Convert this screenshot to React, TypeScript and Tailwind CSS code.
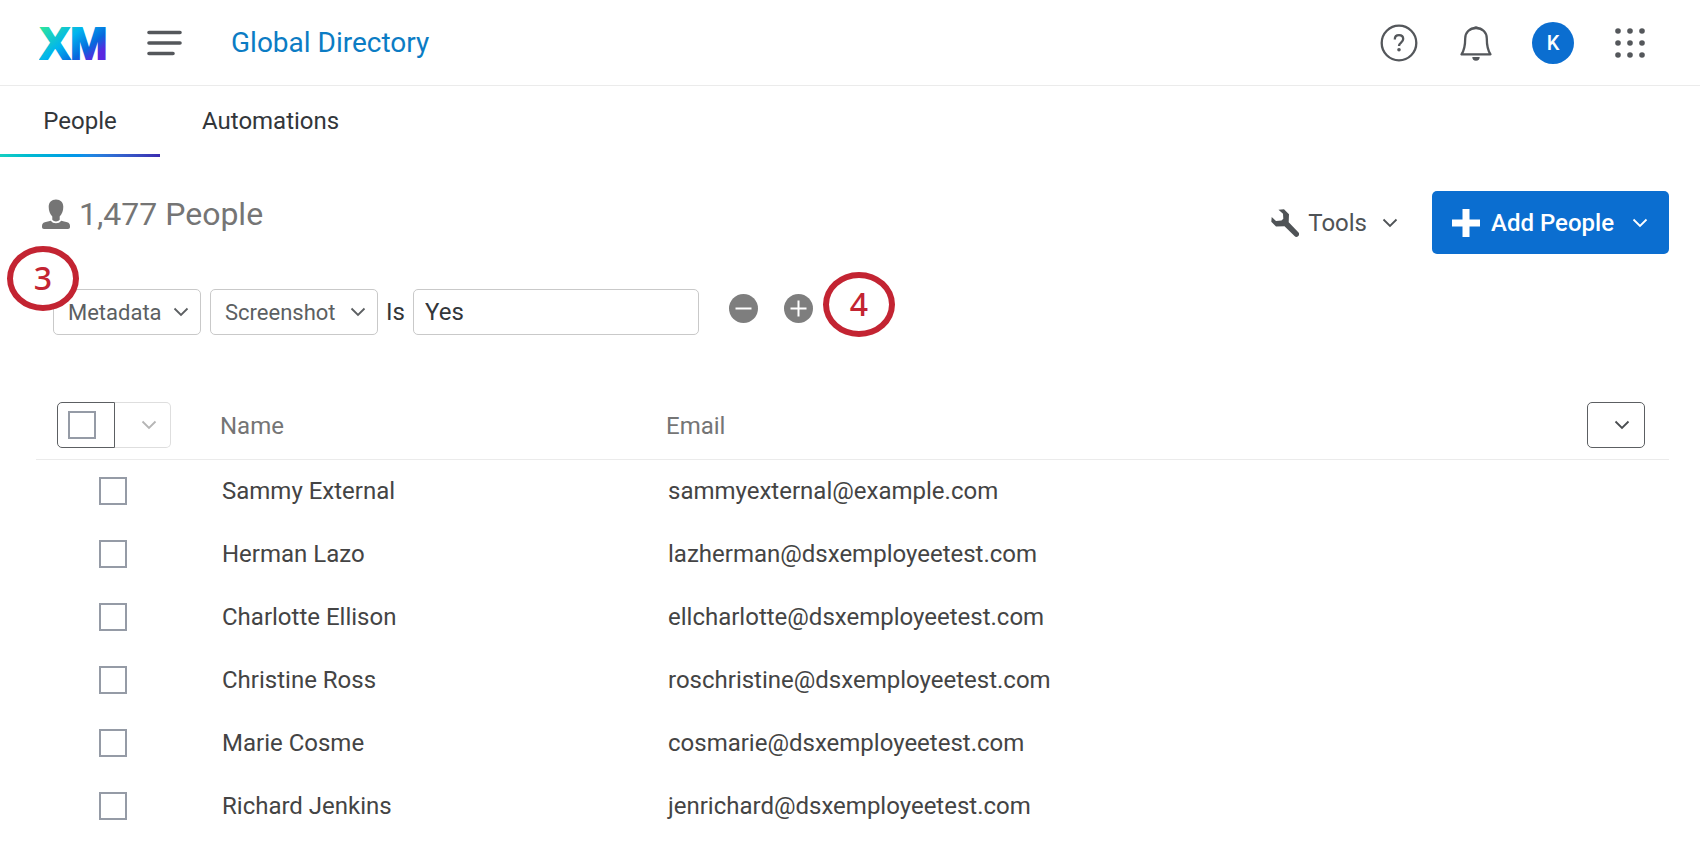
import type { ReactNode } from "react";
import clsx from "clsx";

const people = [
  { name: "Sammy External", email: "sammyexternal@example.com" },
  { name: "Herman Lazo", email: "lazherman@dsxemployeetest.com" },
  { name: "Charlotte Ellison", email: "ellcharlotte@dsxemployeetest.com" },
  { name: "Christine Ross", email: "roschristine@dsxemployeetest.com" },
  { name: "Marie Cosme", email: "cosmarie@dsxemployeetest.com" },
  { name: "Richard Jenkins", email: "jenrichard@dsxemployeetest.com" },
];

const Logo = () => (
  <svg width="70" height="56" viewBox="0 0 70 56" role="img" aria-label="XM">
    <defs>
      <linearGradient
        id="xm"
        gradientUnits="userSpaceOnUse"
        x1="12"
        y1="5"
        x2="56"
        y2="58"
      >
        <stop offset="0" stopColor="#2be3a0" />
        <stop offset="0.38" stopColor="#00b4ef" />
        <stop offset="0.65" stopColor="#0768dd" />
        <stop offset="0.82" stopColor="#5a27e0" />
      </linearGradient>
    </defs>
    <text
      x="1"
      y="44"
      fontFamily="Liberation Sans, sans-serif"
      fontWeight="700"
      fontSize="45"
      fill="url(#xm)"
      stroke="url(#xm)"
      strokeWidth="2"
    >
      XM
    </text>
  </svg>
);

const MenuIcon = () => (
  <svg width="36" height="26" viewBox="0 0 36 26" aria-hidden="true">
    <path
      d="M2 2.500h31M2 13h31M2 23.500h24"
      stroke="#54575b"
      strokeWidth="3.600"
      strokeLinecap="round"
    />
  </svg>
);

const HelpIcon = () => (
  <svg width="38" height="38" viewBox="0 0 38 38" fill="none" aria-hidden="true">
    <circle cx="19" cy="19" r="17.300" stroke="#54575b" strokeWidth="2.300" />
    <path
      d="M14.800 15.400c0-2.600 1.700-4.300 4.200-4.300s4.200 1.600 4.200 3.900c0 3.400-4.200 3.600-4.200 6.900"
      stroke="#54575b"
      strokeWidth="2.300"
    />
    <circle cx="19" cy="25.800" r="1.800" fill="#54575b" />
  </svg>
);

const BellIcon = () => (
  <svg width="32" height="36" viewBox="0 0 32 36" fill="none" aria-hidden="true">
    <path
      d="M16 3C9.500 3 5.200 7.600 5.200 13.500c0 7-.7 11.500-3.700 15.800h29c-3-4.300-3.700-8.800-3.700-15.800C26.800 7.600 22.500 3 16 3Z"
      stroke="#54575b"
      strokeWidth="2.300"
      strokeLinejoin="round"
    />
    <path
      d="M12.200 3.800a4 3.800 0 0 1 7.600 0ZM12.300 32h7.400a3.700 3.700 0 0 1-7.400 0Z"
      fill="#54575b"
    />
  </svg>
);

const GridIcon = () => (
  <svg width="32" height="32" viewBox="0 0 32 32" fill="#54575b" aria-hidden="true">
    {[4, 16, 28].map((cy) =>
      [4, 16, 28].map((cx) => <circle key={`${cx}-${cy}`} cx={cx} cy={cy} r="2.800" />),
    )}
  </svg>
);

const PersonIcon = () => (
  <svg width="28" height="31" viewBox="0 0 28 31" fill="#757575" aria-hidden="true">
    <path d="M14 .5c4.500 0 7.300 3 7.300 7.300 0 4.200-1.300 7.200-3.600 9.600v3.400c-1 1.200-2.300 1.700-3.700 1.700s-2.700-.5-3.700-1.700v-3.400C8 15 6.700 12 6.700 7.800 6.700 3.500 9.500.5 14 .5Z" />
    <path d="M8.800 21.700c1.200 1.700 3 2.500 5.200 2.500s4-.8 5.200-2.500l6 1.500c2 .5 2.800 2 2.800 4V28c0 1.300-.8 2-2 2H2c-1.200 0-2-.7-2-2v-.8c0-2 .8-3.500 2.800-4Z" />
  </svg>
);

const WrenchIcon = () => (
  <svg width="28" height="28" viewBox="0 0 28 28" fill="#4f5356" aria-hidden="true">
    <path d="M7.500.8 13 .3 18 5.200 17.700 13.300 27.300 23.200a2.600 2.600 0 0 1-3.800 3.800L13.500 17.300 5 17.600.3 12.700.7 8 5 12 10.500 11.500 12.300 9.700 12 4.700Z" />
  </svg>
);

const PlusIcon = () => (
  <svg width="28" height="28" viewBox="0 0 28 28" fill="#fff" aria-hidden="true">
    <path d="M10.500 0h7v10.500H28v7H17.500V28h-7V17.500H0v-7h10.500Z" />
  </svg>
);

const Chevron = ({ className }: { className?: string }) => (
  <svg
    width="16"
    height="10"
    viewBox="0 0 16 10"
    fill="none"
    stroke="currentColor"
    strokeWidth="1.800"
    className={className}
    aria-hidden="true"
  >
    <path d="m1.500 1.500 6.500 6.500 6.500-6.500" />
  </svg>
);

const FilterSelect = ({ label, className }: { label: string; className: string }) => (
  <div className={clsx("relative text-[#5c5f62]", className)}>
    <select
      aria-label={`${label} filter`}
      className="h-[46px] w-full appearance-none rounded-[5px] border border-[#c9c9c9] bg-white pl-[14px] text-[22px]"
    >
      <option>{label}</option>
    </select>
    <Chevron className="pointer-events-none absolute top-[18px] right-3" />
  </div>
);

const RoundButton = ({ label, d }: { label: string; d: string }) => (
  <button type="button" aria-label={label}>
    <svg width="29" height="29" viewBox="0 0 29 29" aria-hidden="true">
      <circle cx="14.500" cy="14.500" r="14.500" fill="#7e7e7e" />
      <path d={d} stroke="#fff" strokeWidth="2" />
    </svg>
  </button>
);

const Callout = ({ className, children }: { className: string; children: ReactNode }) => (
  <span
    className={clsx(
      "absolute flex h-[65px] w-[72px] items-center justify-center rounded-[50%] border-[6px] border-[#c32432] bg-white pb-[2px] font-['Noto_Sans',sans-serif] text-[32px] leading-none font-medium text-[#c32432]",
      className,
    )}
  >
    {children}
  </span>
);

const Checkbox = ({ label }: { label: string }) => (
  <input
    type="checkbox"
    aria-label={label}
    className="block size-7 appearance-none border-2 border-[#959ba6] bg-white checked:bg-[#0b6ed0]"
  />
);

const Header = () => (
  <header className="flex h-[86px] items-center justify-between border-b border-[#ebebeb] pr-[54px] pl-[39px]">
    <div className="flex items-center">
      <Logo />
      <button type="button" aria-label="Menu" className="ml-[38px]">
        <MenuIcon />
      </button>
      <a href="#directory" className="ml-12 text-[28px] leading-9 text-[#0b7cc4]">
        Global Directory
      </a>
    </div>
    <div className="flex items-center">
      <button type="button" aria-label="Help">
        <HelpIcon />
      </button>
      <button type="button" aria-label="Notifications" className="ml-[42px]">
        <BellIcon />
      </button>
      <button
        type="button"
        className="ml-10 size-[42px] rounded-full bg-[#0b6ed0] text-xl font-medium text-white"
      >
        K
      </button>
      <button type="button" aria-label="Products" className="ml-10">
        <GridIcon />
      </button>
    </div>
  </header>
);

const Tabs = () => (
  <nav className="flex h-[71px] text-2xl text-[#32363a]">
    <a href="#people" className="flex w-40 flex-col justify-between">
      <span className="pt-[17px] text-center leading-9">People</span>
      <span className="h-[3px] bg-linear-to-r from-[#15cfc0] via-[#0693ea] to-[#3a2bb0]" />
    </a>
    <a href="#automations" className="px-[42px] pt-[17px] leading-9">
      Automations
    </a>
  </nav>
);

const Filters = () => (
  <div className="relative flex pl-[17px]">
    <FilterSelect label="Metadata" className="w-[148px]" />
    <FilterSelect label="Screenshot" className="ml-[9px] w-[168px]" />
    <label
      htmlFor="filter-value"
      className="w-[35px] text-center text-2xl leading-[46px] text-[#32363a]"
    >
      Is
    </label>
    <input
      id="filter-value"
      type="text"
      defaultValue="Yes"
      className="h-[46px] w-[286px] rounded-[5px] border border-[#c9c9c9] px-[11px] text-2xl text-[#32363a]"
    />
    <div className="ml-[30px] flex h-[38px] items-center gap-[26px]">
      <RoundButton label="Remove condition" d="M6.500 14.500h16" />
      <RoundButton label="Add condition" d="M6.500 14.500h16M14.500 6.500v16" />
    </div>
    <Callout className="-top-[43px] -left-[29px]">3</Callout>
    <Callout className="-top-[17px] left-[787px]">4</Callout>
  </div>
);

const PeopleTable = () => (
  <table className="w-full table-fixed border-collapse text-left text-2xl">
    <thead>
      <tr className="h-[68px] border-b border-[#ebebeb] text-[#757575]">
        <th className="w-[162px] pb-[11px] pl-[21px] align-bottom">
          <div className="flex h-[46px]">
            <div className="flex w-[58px] items-center rounded-l-[5px] border border-[#5c5f62] pl-[10px]">
              <Checkbox label="Select all" />
            </div>
            <button
              type="button"
              aria-label="Selection options"
              className="flex w-14 items-center rounded-r-[5px] border border-l-0 border-[#dedede] pl-[26px] text-[#b5b5b5]"
            >
              <Chevron />
            </button>
          </div>
        </th>
        <th className="w-[446px] pb-[17px] pl-[22px] align-bottom font-normal">Name</th>
        <th className="pb-[17px] pl-[22px] align-bottom font-normal">Email</th>
        <th className="w-[106px] pb-[11px] align-bottom">
          <button
            type="button"
            aria-label="Columns"
            className="ml-6 flex h-[46px] w-[58px] items-center rounded-[5px] border border-[#5c5f62] pl-[26px] text-[#4a4d50]"
          >
            <Chevron />
          </button>
        </th>
      </tr>
    </thead>
    <tbody className="text-[#444]">
      {people.map((person) => (
        <tr key={person.email} className="h-[63px]">
          <td className="pl-[63px]">
            <Checkbox label={`Select ${person.name}`} />
          </td>
          <td className="pl-6">{person.name}</td>
          <td colSpan={2} className="pl-6">
            {person.email}
          </td>
        </tr>
      ))}
    </tbody>
  </table>
);

const App = () => {
  return (
    <div className="min-h-screen bg-white font-[Roboto,sans-serif]">
      <Header />
      <Tabs />
      <main className="pt-[34px] pr-[31px] pl-9">
        <div className="flex items-start justify-between">
          <h1 className="flex items-center gap-[9px] pt-[3px] pl-[6px] text-[32px] leading-10 text-[#757575]">
            <PersonIcon />
            1,477 People
          </h1>
          <div className="flex items-center gap-[34px]">
            <button type="button" className="flex items-center text-2xl text-[#4f5356]">
              <WrenchIcon />
              <span className="mr-[15px] ml-[9px]">Tools</span>
              <Chevron />
            </button>
            <button
              type="button"
              className="flex h-[63px] w-[237px] items-center rounded-[5px] bg-[#0b6ed0] pl-5 text-2xl font-medium text-white"
            >
              <PlusIcon />
              <span className="mr-[18px] ml-[11px]">Add People</span>
              <Chevron />
            </button>
          </div>
        </div>
        <div className="pt-[35px] pb-14">
          <Filters />
        </div>
        <PeopleTable />
      </main>
    </div>
  );
};

export default App;
